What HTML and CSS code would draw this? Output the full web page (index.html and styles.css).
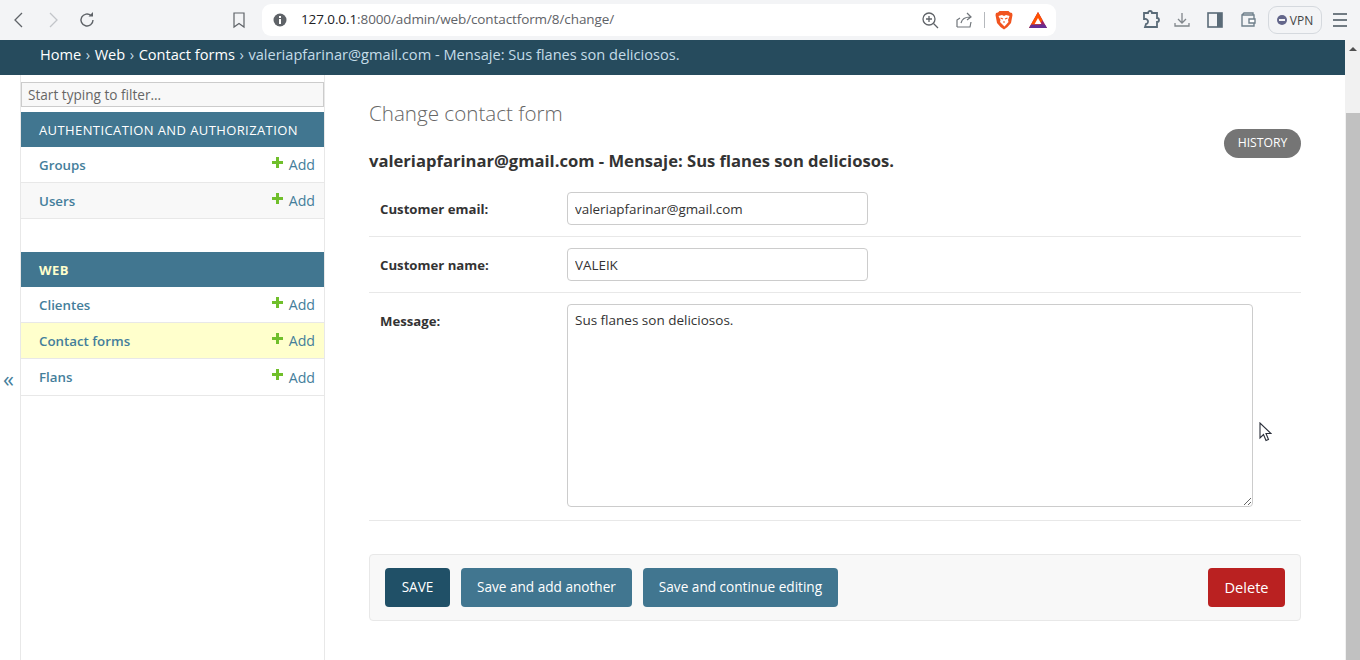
FILE: index.html
```html
<!DOCTYPE html>
<html>
<head>
    <title>Change contact form</title>
    <link rel="stylesheet" href="styles.css">
</head>
<body>
    <div class="toolbar">
        <div class="nav-icons">
            <svg class="ico" viewBox="0 0 20 20"><path d="M13 3 6 10l7 7" fill="none" stroke="#5f6368" stroke-width="1.3"/></svg>
            <svg class="ico" viewBox="0 0 20 20"><path d="M7 3l7 7-7 7" fill="none" stroke="#c2c5c9" stroke-width="1.3"/></svg>
            <svg class="ico" viewBox="0 0 20 20"><path d="M16 10a6 6 0 1 1-2-4.5" fill="none" stroke="#5f6368" stroke-width="1.4"/><path d="M11.5 6.5h4.5V2z" fill="#5f6368"/></svg>
        </div>
        <svg class="ico bookmark" viewBox="0 0 20 20"><path d="M5 3h10v14l-5-3.5L5 17z" fill="none" stroke="#5f6368" stroke-width="1.2"/></svg>
        <div class="urlbar">
            <svg class="info" viewBox="0 0 14 14"><circle cx="7" cy="7" r="6.5" fill="#5f6368"/><rect x="6" y="6" width="2" height="5" fill="#fff"/><rect x="6" y="3" width="2" height="2" fill="#fff"/></svg>
            <span class="url"><span class="host">127.0.0.1</span>:8000/admin/web/contactform/8/change/</span>
            <svg class="ico zoom-ico" viewBox="0 0 20 20"><circle cx="9" cy="9" r="6" fill="none" stroke="#5f6368" stroke-width="1.3"/><path d="M13.5 13.5 18 18M6 9h6M9 6v6" stroke="#5f6368" stroke-width="1.3"/></svg>
            <svg class="ico share" viewBox="0 0 20 20"><path d="M3 17V10l3-2M3 17h13l1-5" fill="none" stroke="#70757a" stroke-width="1.2"/><path d="M7 13c1-4 4-6 9-6M13 3l4 4-4 3" fill="none" stroke="#70757a" stroke-width="1.2"/></svg>
            <span class="url-sep"></span>
            <svg class="brave" viewBox="0 0 18 20"><path d="M4.5 1h9L15 2.5l2 .5.500 2-1.500 8-3.500 4L9 19.500 5.500 17 2 13 .5 5 1 3l2-.5z" fill="#f1541f"/><path d="M3.500 6 7 5l2 1 2-1 3.500 1-1.500 4 .5 2-4 4.500L5 12l.5-2z" fill="#fff"/><path d="M5.500 8 8 9M12.500 8 10 9M8 12h2" stroke="#f1541f" stroke-width="1.200"/></svg>
            <svg class="bat" viewBox="0 0 18 16"><path d="M9 0 18 16H0z" fill="#9e1f63"/><path d="M9 0 13.500 8 9 16H0z" fill="#ff5000"/><path d="M0 16h18l-2.200-3.600H2.200z" fill="#662d91"/><path d="M9 6l3.400 6H5.600z" fill="#fff"/></svg>
        </div>
        <div class="tool-icons">
            <svg class="ico puzzle" viewBox="0 0 20 20"><path d="M3 3h4a2 2 0 0 1 4 0h5v5a2 2 0 0 1 0 4v5H4l1-3a2 2 0 0 0-1-5L3 9z" fill="none" stroke="#5a6b78" stroke-width="1.8"/></svg>
            <svg class="ico dl" viewBox="0 0 20 20"><path d="M10 3v9M6 9l4 4 4-4M3 13v3h14v-3" fill="none" stroke="#80868b" stroke-width="1.3"/></svg>
            <svg class="ico side" viewBox="0 0 20 20"><rect x="3" y="3" width="14" height="14" fill="none" stroke="#5a6b78" stroke-width="1.6"/><rect x="12" y="3" width="5" height="14" fill="#5a6b78"/></svg>
            <svg class="ico wallet" viewBox="0 0 20 20"><path d="M4 5h12v11H4zM4 5l2-2h9v2" fill="none" stroke="#70808c" stroke-width="1.4"/><path d="M11 9h6v4h-6z" fill="#fff" stroke="#70808c" stroke-width="1.4"/></svg>
            <div class="vpn"><span class="vpn-dot"></span>VPN</div>
            <div class="menu-bars"><span></span><span></span><span></span></div>
        </div>
    </div>

    <div class="page">
        <div class="content-col">
            <div class="breadcrumbs">
                <a>Home</a><span class="crumb-sep">›</span><a>Web</a><span class="crumb-sep">›</span><a>Contact forms</a><span class="crumb-sep">›</span><span class="crumb-last">valeriapfarinar@gmail.com - Mensaje: Sus flanes son deliciosos.</span>
            </div>
            <div class="main">
                <div class="toggle"><span class="toggle-arrow">«</span></div>
                <div class="sidebar">
                    <input class="filter" type="text" placeholder="Start typing to filter...">
                    <div class="module">
                        <div class="caption">AUTHENTICATION AND AUTHORIZATION</div>
                        <div class="row"><a class="model">Groups</a><a class="add"><span class="plus"></span>Add</a></div>
                        <div class="row alt"><a class="model">Users</a><a class="add"><span class="plus"></span>Add</a></div>
                    </div>
                    <div class="module">
                        <div class="caption current">WEB</div>
                        <div class="row"><a class="model">Clientes</a><a class="add"><span class="plus"></span>Add</a></div>
                        <div class="row selected"><a class="model">Contact forms</a><a class="add"><span class="plus"></span>Add</a></div>
                        <div class="row"><a class="model">Flans</a><a class="add"><span class="plus"></span>Add</a></div>
                    </div>
                </div>
                <div class="content">
                    <h1>Change contact form</h1>
                    <div class="title-row">
                        <h2>valeriapfarinar@gmail.com - Mensaje: Sus flanes son deliciosos.</h2>
                        <a class="history">HISTORY</a>
                    </div>
                    <div class="form-row">
                        <label>Customer email:</label>
                        <input class="field" type="text" value="valeriapfarinar@gmail.com">
                    </div>
                    <div class="form-row">
                        <label>Customer name:</label>
                        <input class="field" type="text" value="VALEIK">
                    </div>
                    <div class="form-row">
                        <label>Message:</label>
                        <textarea class="field-large">Sus flanes son deliciosos.</textarea>
                    </div>
                    <div class="submit-row">
                        <input class="btn default" type="button" value="SAVE">
                        <input class="btn" type="button" value="Save and add another">
                        <input class="btn" type="button" value="Save and continue editing">
                        <a class="delete">Delete</a>
                    </div>
                </div>
            </div>
        </div>
        <div class="scrollbar">
            <div class="scroll-track"><span class="scroll-up"></span></div>
            <div class="scroll-thumb"></div>
        </div>
    </div>

    <svg class="cursor" viewBox="0 0 13 20"><path d="M1 1v15l3.500-3.500 2.500 6 2.500-1-2.500-6H12z" fill="#fff" stroke="#2a2f3a" stroke-width="1.1"/></svg>
</body>
</html>
```

FILE: styles.css
```css
* {
    box-sizing: border-box;
}

html, body {
    margin: 0;
    height: 100%;
    overflow: hidden;
}

body {
    background-color: #fff;
    font-family: "Open Sans", "Noto Sans", sans-serif;
    color: #333;
    display: flex;
    flex-direction: column;
}

a {
    text-decoration: none;
}

/* browser chrome */
.toolbar {
    height: 40px;
    flex: none;
    background-color: #f3f4f6;
    display: flex;
    align-items: center;
    position: relative;
}

.ico {
    width: 20px;
    height: 20px;
    display: block;
    flex: none;
}

.nav-icons {
    display: flex;
    gap: 14px;
    margin-left: 9px;
}

.bookmark {
    margin-left: 132px;
}

.urlbar {
    width: 794px;
    height: 32px;
    margin-left: 13px;
    background-color: #fff;
    border-radius: 9px;
    display: flex;
    align-items: center;
    padding-left: 11px;
}

.info {
    width: 14px;
    height: 14px;
    flex: none;
}

.url {
    margin-left: 14px;
    padding-bottom: 2px;
    font-size: 13.5px;
    color: #5f6368;
    width: 610px;
    white-space: nowrap;
    letter-spacing: -0.1px;
}

.host {
    color: #202124;
}

.zoom-ico {
    margin-left: 9px;
}

.share {
    margin-left: 14px;
}

.url-sep {
    width: 1px;
    height: 16px;
    background-color: #b5b8bc;
    margin-left: 10px;
}

.brave {
    width: 18px;
    height: 20px;
    margin-left: 10px;
}

.bat {
    width: 18px;
    height: 16px;
    margin-left: 16px;
}

.tool-icons {
    display: flex;
    align-items: center;
    margin-left: 85px;
}

.dl {
    margin-left: 11px;
}

.side {
    margin-left: 13px;
}

.wallet {
    margin-left: 13px;
}

.vpn {
    width: 54px;
    height: 28px;
    margin-left: 10px;
    border: 1px solid #d5d9de;
    border-radius: 9px;
    font-size: 12px;
    color: #444;
    display: flex;
    align-items: center;
    justify-content: center;
    gap: 3px;
}

.vpn-dot {
    width: 10px;
    height: 10px;
    border-radius: 50%;
    background-color: #63668a;
    position: relative;
}

.vpn-dot::after {
    content: "";
    position: absolute;
    left: 2px;
    right: 2px;
    top: 4px;
    height: 2px;
    background-color: #f3f4f6;
}

.menu-bars {
    margin-left: 11px;
    display: flex;
    flex-direction: column;
    gap: 4px;
    width: 14px;
}

.menu-bars span {
    height: 2px;
    background-color: #707a82;
}

/* admin page */
.page {
    flex: 1;
    display: flex;
    min-height: 0;
}

.content-col {
    flex: 1;
    min-width: 0;
    display: flex;
    flex-direction: column;
}

.breadcrumbs {
    height: 35px;
    flex: none;
    background-color: #264b5d;
    padding: 4px 0 0 40px;
    font-size: 14.6px;
    line-height: 20px;
    color: #fff;
    white-space: nowrap;
}

.breadcrumbs a {
    color: #fff;
}

.crumb-sep {
    color: #c4dce8;
    margin: 0 4.5px;
}

.crumb-last {
    color: #c4dce8;
}

.main {
    flex: 1;
    display: flex;
    min-height: 0;
}

.toggle {
    width: 21px;
    flex: none;
    border-right: 1px solid #e8e8e8;
    position: relative;
}

.toggle-arrow {
    position: absolute;
    left: 3px;
    top: 288px;
    font-size: 22px;
    line-height: 30px;
    color: #447e9b;
}

.sidebar {
    width: 304px;
    flex: none;
    border-right: 1px solid #e8e8e8;
    padding-top: 7px;
}

.filter {
    display: block;
    width: 303px;
    height: 25px;
    padding: 0 6px;
    border: 1px solid #ccc;
    background-color: #f8f8f8;
    font-family: inherit;
    font-size: 13.6px;
    margin-bottom: 5px;
    border-radius: 0;
}

.filter::placeholder {
    color: #666;
    opacity: 1;
}

.module {
    margin-bottom: 33px;
}

.caption {
    height: 35px;
    background-color: #417690;
    color: #fff;
    font-size: 13px;
    line-height: 37px;
    padding-left: 18px;
    letter-spacing: 0.4px;
    white-space: nowrap;
}

.caption.current {
    color: #ffffcc;
    font-weight: 700;
}

.row {
    height: 36px;
    display: flex;
    justify-content: space-between;
    align-items: center;
    padding: 0 9px 0 18px;
    border-bottom: 1px solid #e8e8e8;
    font-size: 13.3px;
}

.module:last-child .row:last-child {
    height: 37px;
}

.row.alt {
    background-color: #f8f8f8;
}

.row.selected {
    background-color: #ffffcc;
}

.model {
    color: #447e9b;
    font-weight: 600;
}

.add {
    color: #447e9b;
    display: flex;
    align-items: center;
    font-size: 14.2px;
}

.plus {
    width: 11px;
    height: 11px;
    margin: -5px 6px 0 0;
    background:
        linear-gradient(#70bf2b, #70bf2b) center / 11px 3px no-repeat,
        linear-gradient(#70bf2b, #70bf2b) center / 3px 11px no-repeat;
}

.content {
    flex: 1;
    min-width: 0;
    padding: 24px 44px 0;
}

h1 {
    margin: 0;
    font-size: 20.6px;
    line-height: 28px;
    font-weight: 300;
    color: #666;
}

.title-row {
    position: relative;
    height: 54px;
    padding-top: 23px;
}

h2 {
    margin: 0;
    font-size: 16.6px;
    line-height: 22px;
    font-weight: 700;
    color: #333;
    white-space: nowrap;
}

.history {
    position: absolute;
    right: 0;
    top: 2px;
    width: 77px;
    height: 29px;
    border-radius: 15px;
    background-color: #757575;
    color: #fff;
    font-size: 12.2px;
    line-height: 28px;
    text-align: center;
}

.form-row {
    display: flex;
    align-items: flex-start;
    padding: 11px 11px 10px;
    border-bottom: 1px solid #e8e8e8;
    height: 56px;
}

.form-row label {
    width: 187px;
    flex: none;
    font-size: 13.2px;
    font-weight: 700;
    line-height: 35px;
    color: #333;
}

.field {
    width: 301px;
    height: 33px;
    border: 1px solid #ccc;
    border-radius: 4px;
    padding: 0 7px;
    font-family: inherit;
    font-size: 13.4px;
    color: #333;
}

.field-large {
    width: 686px;
    height: 203px;
    border: 1px solid #ccc;
    border-radius: 4px;
    padding: 7px;
    font-family: inherit;
    font-size: 13.5px;
    line-height: 17px;
    color: #333;
    display: block;
}

.form-row:has(.field-large) {
    height: 228px;
}

.submit-row {
    margin-top: 33px;
    height: 67px;
    border: 1px solid #e8e8e8;
    border-radius: 4px;
    background-color: #f8f8f8;
    padding: 13px 15px;
    display: flex;
    gap: 11px;
}

.btn {
    height: 39px;
    padding: 0 16px 2px;
    border: none;
    border-radius: 4px;
    background-color: #417690;
    color: #fff;
    font-family: inherit;
    font-size: 13.6px;
}

.btn.default {
    background-color: #205067;
    width: 65px;
    padding: 0 0 2px;
}

.delete {
    margin-left: auto;
    width: 77px;
    height: 39px;
    border-radius: 4px;
    background-color: #ba2121;
    color: #fff;
    font-size: 14.6px;
    line-height: 39px;
    text-align: center;
}

/* scrollbar */
.scrollbar {
    width: 15px;
    flex: none;
    background-color: #f1f1f1;
    padding-left: 1px;
    display: flex;
    flex-direction: column;
}

.scroll-track {
    height: 73px;
    flex: none;
    position: relative;
}

.scroll-up {
    position: absolute;
    left: 3px;
    top: 7px;
    border-left: 4px solid transparent;
    border-right: 4px solid transparent;
    border-bottom: 4px solid #505050;
}

.scroll-thumb {
    flex: 1;
    background-color: #c1c1c1;
}

.cursor {
    position: absolute;
    left: 1259px;
    top: 422px;
    width: 13px;
    height: 20px;
}
```
